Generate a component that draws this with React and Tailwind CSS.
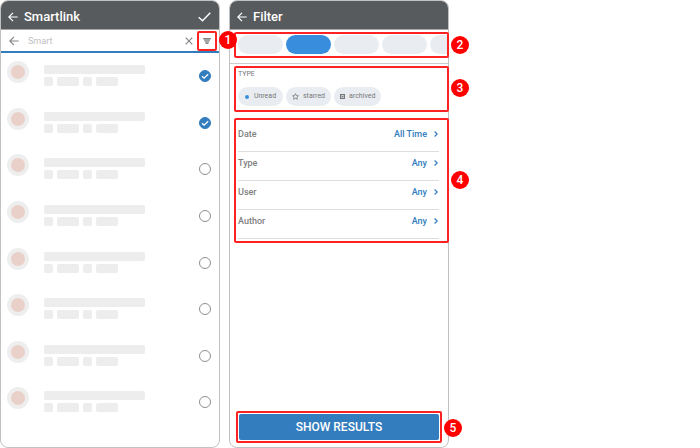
import { useState } from "react";

const filters = [
  { label: "Date", value: "All Time" },
  { label: "Type", value: "Any" },
  { label: "User", value: "Any" },
  { label: "Author", value: "Any" },
];

function ArrowIcon({ className }) {
  return (
    <svg viewBox="0 0 10 10" className={className} fill="none" stroke="currentColor" strokeWidth="1.2" aria-hidden="true">
      <path d="M9.7 5H1M5 .8.8 5 5 9.2" />
    </svg>
  );
}

function Badge({ children, className }) {
  return (
    <span
      className={`absolute z-10 flex size-[18px] items-center justify-center rounded-full bg-[#f00] text-[12px] font-medium leading-none text-white ${className}`}
    >
      {children}
    </span>
  );
}

function Chip({ icon, children }) {
  return (
    <button className="flex h-[19px] min-w-[45px] items-center justify-center gap-1 rounded-full bg-[#e9edf2] px-[6px] text-[7px] leading-none text-[#777]">
      {icon}
      {children}
    </button>
  );
}

function ResultRow({ index, checked, onToggle }) {
  return (
    <li className="flex items-start pt-2 pl-[6px] pr-2">
      <span className="flex size-[22px] items-center justify-center rounded-full bg-[#eee]">
        <span className="size-[14px] rounded-full bg-[#e9d0c9]" />
      </span>

      <div className="mt-1 ml-[15px] w-[101px]">
        <div className="h-[9px] rounded-xs bg-[#ededed]" />
        <div className="mt-[3px] flex gap-1">
          <span className="h-[9px] w-[9px] rounded-xs bg-[#ededed]" />
          <span className="h-[9px] w-[22px] rounded-xs bg-[#ededed]" />
          <span className="h-[9px] w-[9px] rounded-xs bg-[#ededed]" />
          <span className="h-[9px] w-[22px] rounded-xs bg-[#ededed]" />
        </div>
      </div>

      <label className="relative mt-[9px] ml-auto block size-3">
        <input
          type="checkbox"
          aria-label={`Select result ${index + 1}`}
          checked={checked}
          onChange={onToggle}
          className="block size-3 appearance-none rounded-full border border-[#8e8e8e] bg-white checked:border-[#337dbe] checked:bg-[#337dbe]"
        />
        {checked && (
          <svg viewBox="0 0 12 12" className="pointer-events-none absolute inset-0 size-3" fill="none" stroke="white" strokeWidth="1.3" aria-hidden="true">
            <path d="M3 6.2 5.1 8.2 9.2 4.2" />
          </svg>
        )}
      </label>
    </li>
  );
}

function SearchScreen() {
  const [query, setQuery] = useState("Smart");
  const [selected, setSelected] = useState([true, true, false, false, false, false, false, false]);

  const toggle = (i) => setSelected(selected.map((s, n) => (n === i ? !s : s)));

  return (
    <section className="flex min-w-0 flex-col rounded-lg border border-[#c2c2c2] bg-white">
      {/* Header */}
      <header className="flex h-[29px] items-center rounded-t-[7px] border-b border-[#a5a7a8] bg-[#575b5d] pt-1 pl-[7px] pr-2 text-white">
        <button aria-label="Back"><ArrowIcon className="size-[10px]" /></button>
        <h1 className="ml-[6px] text-[13px] font-medium leading-4">Smartlink</h1>
        <button aria-label="Confirm" className="ml-auto">
          <svg viewBox="0 0 13 10" className="h-[10px] w-[13px]" fill="none" stroke="currentColor" strokeWidth="1.4" aria-hidden="true">
            <path d="M.7 5.3 4.5 8.8 12.3.7" />
          </svg>
        </button>
      </header>

      {/* Search */}
      <div className="flex h-[23px] items-center border-b-2 border-[#337dbe] pl-2 pr-[2px] text-[#888]">
        <button aria-label="Leave search"><ArrowIcon className="size-[10px]" /></button>
        <input
          type="text"
          aria-label="Search"
          value={query}
          onChange={(e) => setQuery(e.target.value)}
          className="ml-[9px] min-w-0 flex-1 bg-transparent text-[9px] leading-4 text-[#c0c0c0] outline-none"
        />
        <button aria-label="Clear search" onClick={() => setQuery("")}>
          <svg viewBox="0 0 8 8" className="size-2" fill="none" stroke="currentColor" strokeWidth="1.2" aria-hidden="true">
            <path d="M.7.7l6.6 6.6M7.3.7.7 7.3" />
          </svg>
        </button>
        <div className="relative ml-1">
          <button aria-label="Filter" className="flex size-5 items-center justify-center rounded-xs border-2 border-[#f22]">
            <svg viewBox="0 0 8 6" className="h-[6px] w-2" fill="none" stroke="currentColor" strokeWidth="1.3" aria-hidden="true">
              <path d="M0 .6h8M1 2.2h6M1.8 3.8h4.4M2.6 5.4h2.8" />
            </svg>
          </button>
          <Badge className="top-0 left-[22px]">1</Badge>
        </div>
      </div>

      {/* Results */}
      <ul className="mb-[21px] grid flex-1 grid-rows-8">
        {selected.map((checked, i) => (
          <ResultRow key={i} index={i} checked={checked} onToggle={() => toggle(i)} />
        ))}
      </ul>
    </section>
  );
}

function FilterScreen() {
  const [tab, setTab] = useState(1);

  return (
    <section className="flex min-w-0 flex-col rounded-lg border border-[#c2c2c2] bg-white">
      {/* Header */}
      <header className="flex h-[29px] items-center rounded-t-[7px] border-b border-[#a5a7a8] bg-[#575b5d] pt-1 pl-[7px] text-white">
        <button aria-label="Back"><ArrowIcon className="size-[10px]" /></button>
        <h1 className="ml-[6px] text-[13px] font-medium leading-4">Filter</h1>
      </header>

      {/* Tabs */}
      <div className="border-b border-[#ccc] pt-[2px] pb-[5px]">
        <div className="relative -mr-px ml-1 rounded-xs border-2 border-[#f22]">
          <div className="flex gap-[3px] overflow-hidden pt-px pb-[2px] pl-[2px]">
            {[0, 1, 2, 3, 4].map((i) => (
              <button
                key={i}
                aria-label={`Tab ${i + 1}`}
                onClick={() => setTab(i)}
                className={`h-[19px] w-[45px] shrink-0 rounded-full ${tab === i ? "bg-[#388edd]" : "bg-[#e9edf2]"}`}
              />
            ))}
          </div>
          <Badge className="top-[2px] -right-[22px]">2</Badge>
        </div>
      </div>

      {/* Type chips */}
      <div className="relative mt-[2px] -mr-px ml-1 rounded-xs border-2 border-[#f22] pt-[2px] pb-1 pl-[2px]">
        <h2 className="text-[7px] leading-[8px] text-[#777]">TYPE</h2>
        <div className="mt-[9px] flex gap-[3px]">
          <Chip icon={<span className="mr-px size-1 rounded-full bg-[#388edd]" />}>Unread</Chip>
          <Chip
            icon={
              <svg viewBox="0 0 8 8" className="size-[7px] shrink-0" fill="none" stroke="currentColor" strokeWidth=".9" aria-hidden="true">
                <path d="m4 .7 1 2.2 2.4.3-1.8 1.6.5 2.4L4 6 1.9 7.2l.5-2.4L.6 3.2 3 2.9z" />
              </svg>
            }
          >
            starred
          </Chip>
          <Chip
            icon={
              <svg viewBox="0 0 6 6" className="size-[5px] shrink-0" fill="none" stroke="currentColor" strokeWidth="1.4" aria-hidden="true">
                <path d="M.7.7h4.6v4.6H.7zM2 3h2" />
              </svg>
            }
          >
            archived
          </Chip>
        </div>
        <Badge className="top-[11px] -right-[22px]">3</Badge>
      </div>

      {/* Filter list */}
      <div className="relative mt-[6px] -mr-px ml-1 rounded-xs border-2 border-[#f22] pt-[3px] pr-2 pb-[2px] pl-[2px]">
        {filters.map((f) => (
          <button
            key={f.label}
            className="flex h-[29px] w-full items-center border-b border-[#ddd] pb-[6px] text-[9px] font-medium leading-none text-[#808080]"
          >
            {f.label}
            <span className="ml-auto text-[#337dbe]">{f.value}</span>
            <svg viewBox="0 0 4 6" className="mr-px ml-[7px] h-[6px] w-1 text-[#337dbe]" fill="none" stroke="currentColor" strokeWidth="1.2" aria-hidden="true">
              <path d="M.6.5 3.2 3 .6 5.5" />
            </svg>
          </button>
        ))}
        <Badge className="top-[51px] -right-[22px]">4</Badge>
      </div>

      {/* Submit */}
      <div className="relative mt-auto mr-[6px] mb-1 ml-[6px] rounded-xs border-2 border-[#f22] p-px">
        <button className="h-[26px] w-full rounded-xs bg-[#337dbe] text-xs font-medium leading-none text-white">
          SHOW RESULTS
        </button>
        <Badge className="top-[6px] -right-[22px]">5</Badge>
      </div>
    </section>
  );
}

export default function App() {
  return (
    <main className="grid min-h-screen grid-cols-[minmax(0,220fr)_minmax(0,220fr)_minmax(0,242fr)] gap-[9px] bg-white font-[Roboto,sans-serif]">
      <SearchScreen />
      <FilterScreen />
    </main>
  );
}
